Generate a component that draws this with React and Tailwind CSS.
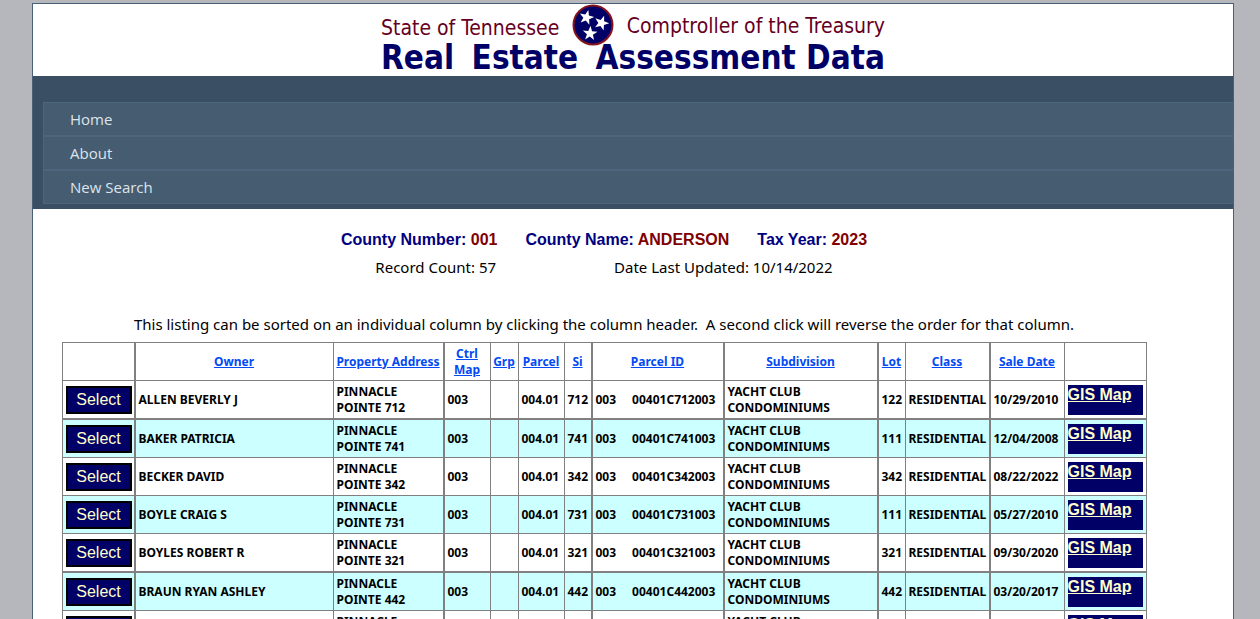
const COLUMNS = [
  { label: "", width: "w-[73px]", edge: "border-r-2" },
  { label: "Owner", width: "w-[198px]", edge: "border-r" },
  { label: "Property Address", width: "w-[111px]", edge: "border-r-2" },
  { label: "Ctrl Map", width: "w-[46px]", edge: "border-r" },
  { label: "Grp", width: "w-[28px]", edge: "border-r" },
  { label: "Parcel", width: "w-[46px]", edge: "border-r" },
  { label: "Si", width: "w-[28px]", edge: "border-r-2" },
  { label: "Parcel ID", width: "w-[132px]", edge: "border-r-2" },
  { label: "Subdivision", width: "w-[154px]", edge: "border-r-2" },
  { label: "Lot", width: "w-[27px]", edge: "border-r" },
  { label: "Class", width: "w-[85px]", edge: "border-r-2" },
  { label: "Sale Date", width: "w-[74px]", edge: "border-r" },
  { label: "", width: "w-[82px]", edge: "border-r" },
];

const ROWS = [
  { owner: "ALLEN BEVERLY J", unit: "712", lot: "122", sold: "10/29/2010" },
  { owner: "BAKER PATRICIA", unit: "741", lot: "111", sold: "12/04/2008" },
  { owner: "BECKER DAVID", unit: "342", lot: "342", sold: "08/22/2022" },
  { owner: "BOYLE CRAIG S", unit: "731", lot: "111", sold: "05/27/2010" },
  { owner: "BOYLES ROBERT R", unit: "321", lot: "321", sold: "09/30/2020" },
  { owner: "BRAUN RYAN ASHLEY", unit: "442", lot: "442", sold: "03/20/2017" },
  { owner: "", unit: "", lot: "", sold: "" },
];

const STAR = "0,-6.2 1.5,-2 5.9,-1.9 2.4,0.8 3.6,5 0,2.5 -3.6,5 -2.4,0.8 -5.9,-1.9 -1.5,-2";

function Emblem() {
  return (
    <svg viewBox="0 0 42 42" className="size-[42px]" aria-hidden="true">
      <circle cx="21" cy="21" r="19.5" fill="#000066" stroke="#85141f" strokeWidth="2" />
      <g fill="#fff">
        <polygon points={STAR} transform="translate(14.5 13.5) rotate(14) scale(1.25)" />
        <polygon points={STAR} transform="translate(29.5 19) rotate(20) scale(1.25)" />
        <polygon points={STAR} transform="translate(18 29.5) rotate(4) scale(1.25)" />
      </g>
    </svg>
  );
}

function Banner() {
  return (
    <header className="flex h-[72px] justify-center font-['DejaVu_Sans_Condensed','DejaVu_Sans',sans-serif]">
      <div className="flex w-[504px] flex-col">
        <div className="flex h-9 items-start justify-between text-[21px] leading-7 text-[#660022]">
          <span className="pt-2.5">State of Tennessee</span>
          <Emblem />
          <span className="pt-2">Comptroller of the Treasury</span>
        </div>
        <h1 className="flex justify-between whitespace-pre text-[33px] leading-9 font-bold text-[#000066]">
          <span>Real</span>
          <span>Estate</span>
          <span>Assessment Data</span>
        </h1>
      </div>
    </header>
  );
}

function Nav() {
  return (
    <nav className="bg-[#3a4f63] pt-[26px] pb-[5px] pl-2.5">
      <ul>
        {["Home", "About", "New Search"].map((item) => (
          <li key={item}>
            <a
              href="#"
              className="block h-[34px] border border-r-0 border-[#4e667d] bg-[#465c71] pl-[26px] text-[15px] leading-8 text-[#dde4ec]"
            >
              {item}
            </a>
          </li>
        ))}
      </ul>
    </nav>
  );
}

function Summary() {
  const facts = [
    ["County Number:", "001"],
    ["County Name:", "ANDERSON"],
    ["Tax Year:", "2023"],
  ];
  return (
    <section className="flex flex-col items-center">
      <div className="flex gap-7 font-['Liberation_Sans',Arial,sans-serif] text-base leading-6 font-bold text-[#000080]">
        {facts.map(([name, value]) => (
          <span key={name}>
            {name} <span className="text-[#800000]">{value}</span>
          </span>
        ))}
      </div>
      <div className="mt-[3px] flex gap-[118px] font-['Noto_Sans',sans-serif] text-[15px] leading-6">
        <span>Record Count: 57</span>
        <span>Date Last Updated: 10/14/2022</span>
      </div>
      <p className="mt-[33px] font-['Noto_Sans',sans-serif] text-[15px] leading-6 whitespace-pre">
        {"This listing can be sorted on an individual column by clicking the column header.  A second click will reverse the order for that column."}
      </p>
    </section>
  );
}

function Row({ row, index }) {
  const line = index % 4 === 0 ? "border-b-2" : "border-b";
  const height = index % 4 === 0 ? "h-[39px]" : "h-[38px]";
  const cells = [
    <button className="mx-auto block h-7 w-[66px] border-2 border-black bg-[#000066] font-['Liberation_Sans',Arial,sans-serif] text-base leading-6 font-normal text-[#ffffcc]">
      Select
    </button>,
    row.owner,
    <>PINNACLE<br />POINTE {row.unit}</>,
    "003",
    "",
    "004.01",
    row.unit,
    <span className="flex gap-4"><span>003</span>{row.unit && <span>00401C{row.unit}003</span>}</span>,
    <>YACHT CLUB<br />CONDOMINIUMS</>,
    row.lot,
    "RESIDENTIAL",
    row.sold,
    <a
      href="#"
      className="block h-[30px] w-[75px] bg-[#000066] font-['Liberation_Sans',Arial,sans-serif] text-base leading-5 text-[#ffffcc] underline"
    >
      GIS Map
    </a>,
  ];
  return (
    <tr className={index % 2 ? "bg-[#ccffff]" : "bg-white"}>
      {cells.map((cell, i) => (
        <td key={i} className={`${COLUMNS[i].edge} ${line} ${height} border-[#808080] px-[3px] py-0 align-middle whitespace-nowrap`}>
          {cell}
        </td>
      ))}
    </tr>
  );
}

function Listing() {
  return (
    <table className="mx-auto mt-1.5 w-[1085px] table-fixed border-separate border-spacing-0 border-t border-l border-[#808080] font-['Noto_Sans',sans-serif] text-xs leading-4 font-bold text-black">
      <thead>
        <tr>
          {COLUMNS.map((col, i) => (
            <th key={i} className={`${col.width} ${col.edge} h-[38px] border-b border-[#808080] p-0 text-center font-bold`}>
              {col.label && <a href="#" className="text-[#034af3] underline">{col.label}</a>}
            </th>
          ))}
        </tr>
      </thead>
      <tbody>
        {ROWS.map((row, i) => (
          <Row key={i} row={row} index={i} />
        ))}
      </tbody>
    </table>
  );
}

export default function App() {
  return (
    <div className="min-h-screen bg-[#b6b7bc] pt-[3px] font-['Open_Sans',sans-serif] text-black">
      <div className="mr-[26px] ml-8 border border-[#496077] bg-white">
        <Banner />
        <Nav />
        <main className="pt-[19px] pr-[58px] pb-6">
          <Summary />
          <Listing />
        </main>
      </div>
    </div>
  );
}
